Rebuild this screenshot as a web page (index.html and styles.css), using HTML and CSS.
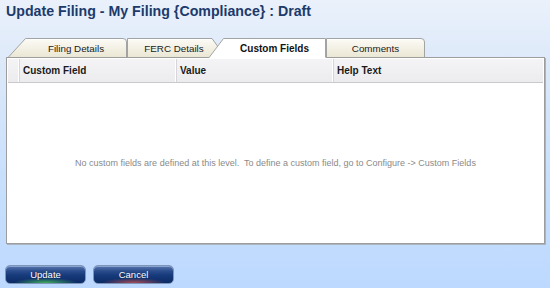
FILE: index.html
```html
<!DOCTYPE html>
<html>
<head>
<meta charset="utf-8">
<link rel="stylesheet" href="styles.css">
</head>
<body>
<div class="page">
  <h1 class="title">Update Filing - My Filing {Compliance} : Draft</h1>

  <div class="tabs">
    <div class="tab tab-first">
      <svg class="tab-shape" width="119" height="19" viewBox="0 0 119 19">
        <defs>
          <linearGradient id="beige" x1="0" y1="0" x2="0" y2="1">
            <stop offset="0" stop-color="#fcfbf6"/>
            <stop offset="1" stop-color="#ebe7d5"/>
          </linearGradient>
        </defs>
        <path d="M0.5 19 L17.5 0.5 H115 Q118.5 0.5 118.5 4 V19" fill="url(#beige)" stroke="#a3a3a3"/>
        <path d="M18.5 1.5 H115" stroke="#ffffff" fill="none"/>
      </svg>
      <span class="tab-label">Filing Details</span>
    </div>
    <div class="tab tab-second">
      <svg class="tab-shape" width="99" height="19" viewBox="0 0 99 19">
        <path d="M0.5 19 V0.5 H85 L98.5 19" fill="url(#beige)" stroke="#a3a3a3"/>
        <path d="M1.5 1.5 H84" stroke="#ffffff" fill="none"/>
      </svg>
      <span class="tab-label">FERC Details</span>
    </div>
    <div class="tab tab-active">
      <svg class="tab-shape" width="117" height="20" viewBox="0 0 117 20">
        <path d="M0.5 19 L14.5 0.5 H116.5 V20 H0.5 Z" fill="#ffffff" stroke="none"/>
        <path d="M0.5 19 L14.5 0.5 H116.5 V19" fill="none" stroke="#a3a3a3"/>
      </svg>
      <span class="tab-label">Custom Fields</span>
    </div>
    <div class="tab tab-last">
      <svg class="tab-shape" width="99" height="19" viewBox="0 0 99 19">
        <path d="M0.5 19 V0.5 H95 Q98.5 0.5 98.5 4 V19" fill="url(#beige)" stroke="#a3a3a3"/>
        <path d="M1.5 1.5 H95" stroke="#ffffff" fill="none"/>
      </svg>
      <span class="tab-label">Comments</span>
    </div>
  </div>

  <div class="panel">
    <div class="grid-head">
      <div class="col col-sel"></div>
      <div class="col">Custom Field</div>
      <div class="col">Value</div>
      <div class="col col-last">Help Text</div>
    </div>
    <div class="grid-body">
      <p class="empty">No custom fields are defined at this level.&nbsp; To define a custom field, go to Configure -&gt; Custom Fields</p>
    </div>
  </div>

  <div class="actions">
    <button class="btn btn-update">Update</button>
    <button class="btn btn-cancel">Cancel</button>
  </div>
</div>
</body>
</html>
```

FILE: styles.css
```css
html, body {
  margin: 0;
  padding: 0;
}

body {
  width: 550px;
  height: 288px;
  overflow: hidden;
  background: linear-gradient(to bottom, #eaf1fb 0%, #dbe8f9 25%, #c9e0fd 60%, #bdd9ff 100%);
  font-family: "Liberation Sans", Arial, sans-serif;
}

.page {
  display: flex;
  flex-direction: column;
}

.title {
  margin: 0;
  padding: 2px 0 0 6px;
  height: 18px;
  line-height: 18px;
  font-size: 14.2px;
  font-weight: bold;
  color: #1d3a6b;
}

.tabs {
  position: relative;
  z-index: 2;
  display: flex;
  height: 19px;
  margin-top: 18px;
  padding-left: 8px;
}

.tab {
  position: relative;
  height: 19px;
  display: flex;
  align-items: center;
  font-size: 9.8px;
  color: #1a1a1a;
}

.tab-shape {
  position: absolute;
  left: 0;
  top: 0;
  display: block;
}

.tab-label {
  position: relative;
  flex: 1;
  text-align: center;
  line-height: 19px;
  padding-top: 2px;
}

.tab-first {
  width: 119px;
  padding-left: 17px;
  box-sizing: border-box;
}

.tab-second {
  width: 99px;
  padding-right: 5px;
  box-sizing: border-box;
}

.tab-active {
  width: 117px;
  height: 20px;
  margin-left: -17px;
  padding-left: 14px;
  box-sizing: border-box;
  font-size: 10px;
  font-weight: bold;
  color: #111;
  z-index: 3;
}

.tab-active .tab-label {
  line-height: 18px;
  align-self: flex-start;
}

.tab-last {
  width: 99px;
}

.panel {
  position: relative;
  z-index: 1;
  margin-left: 6px;
  width: 539px;
  height: 187px;
  box-sizing: border-box;
  border: 1px solid #9d9d9d;
  box-shadow: 1px 1px 0 #aab3c0;
  background: #ffffff;
  padding: 1px;
  display: flex;
  flex-direction: column;
}

.grid-head {
  display: grid;
  grid-template-columns: 12px 157px 157px 1fr;
  height: 24px;
  background: linear-gradient(to bottom, #f4f4f6, #ececef);
  border-bottom: 1px solid #c9c9cc;
  box-sizing: border-box;
  font-size: 10px;
  font-weight: bold;
  color: #1a1a1a;
}

.col {
  padding-left: 3px;
  padding-top: 1px;
  line-height: 22px;
  border-right: 1px solid #d6d6da;
  box-shadow: inset -1px 0 0 #ffffff;
  white-space: nowrap;
}

.col-sel {
  padding-left: 0;
}

.col-last {
  border-right: none;
  box-shadow: none;
}

.grid-body {
  flex: 1;
  display: flex;
  align-items: center;
  justify-content: center;
}

.empty {
  margin: 0;
  font-size: 9px;
  color: #8a8a8a;
  white-space: nowrap;
  padding-top: 1px;
}

.actions {
  display: flex;
  gap: 7px;
  margin-top: 21px;
  padding-left: 5px;
}

.btn {
  width: 81px;
  height: 19px;
  padding: 0;
  border: 1px solid #7e95ba;
  border-radius: 5px;
  font-family: "Liberation Sans", Arial, sans-serif;
  font-size: 9.5px;
  color: #ffffff;
  text-shadow: 0 0 1px #0b2559;
  box-shadow: inset 0 1px 0 #8aa3cf;
  cursor: pointer;
}

.btn-update {
  background:
    radial-gradient(ellipse 32px 5px at 50% 100%, rgba(70, 190, 90, 0.9), rgba(70, 190, 90, 0) 100%),
    linear-gradient(to bottom, #5a78b0 0%, #2a4c8c 30%, #163a7a 55%, #0c2b66 100%);
}

.btn-cancel {
  background:
    radial-gradient(ellipse 32px 5px at 50% 100%, rgba(190, 80, 80, 0.9), rgba(190, 80, 80, 0) 100%),
    linear-gradient(to bottom, #5a78b0 0%, #2a4c8c 30%, #163a7a 55%, #0c2b66 100%);
}
```
